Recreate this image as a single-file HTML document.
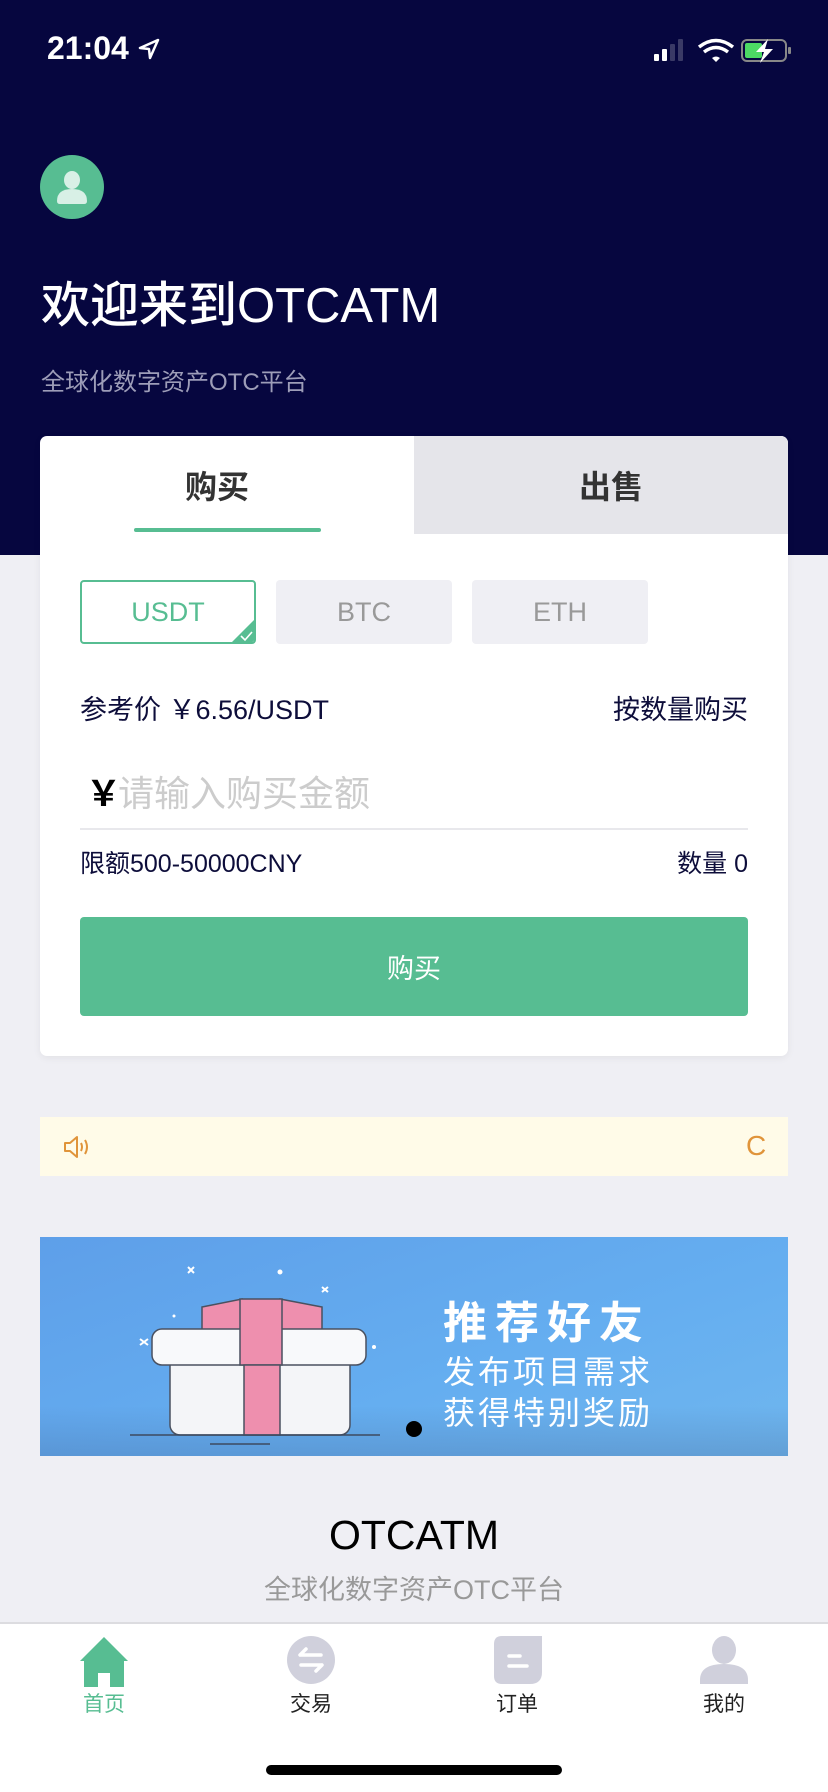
<!DOCTYPE html>
<html><head><meta charset="utf-8">
<style>
*{margin:0;padding:0;box-sizing:border-box}
body{width:828px;height:1792px;background:#efeff4;font-family:"Liberation Sans","Noto Sans CJK SC",sans-serif;position:relative;overflow:hidden}
.abs{position:absolute}
.hdr{left:0;top:0;width:828px;height:555px;background:#06063f}
.card{left:40px;top:436px;width:748px;height:620px;background:#fff;border-radius:7px;box-shadow:0 2px 8px rgba(0,0,0,.06);overflow:hidden}
.coin{position:absolute;top:144px;width:176px;height:64px;border-radius:4px;background:#efeff4;color:#999;font-size:27px;display:flex;align-items:center;justify-content:center}
</style></head><body>
<div class="abs hdr"></div>
<div class="abs" style="left:47px;top:30px;color:#fff;font-size:32px;font-weight:bold">21:04</div>
<svg class="abs" style="left:138px;top:38px" width="22" height="22" viewBox="0 0 22 22"><path d="M20 2 L2 10 L11 11 L12 20 Z" fill="none" stroke="#fff" stroke-width="2.5" stroke-linejoin="round"/></svg>
<svg class="abs" style="left:652px;top:38px" width="140" height="26" viewBox="0 0 140 26">
<rect x="2" y="16" width="5" height="7" rx="1" fill="#fff"/><rect x="10" y="11" width="5" height="12" rx="1" fill="#fff"/><rect x="18" y="6" width="5" height="17" rx="1" fill="#3a3a66"/><rect x="26" y="1" width="5" height="22" rx="1" fill="#3a3a66"/>
<path d="M47 9 Q64 -4 81 9" stroke="#fff" stroke-width="3.5" fill="none"/><path d="M52 14 Q64 5 76 14" stroke="#fff" stroke-width="3.5" fill="none"/><path d="M60 20 L64 24 L68 20 Q64 17 60 20Z" fill="#fff"/>
<rect x="90" y="2" width="44" height="21" rx="5" fill="none" stroke="#888" stroke-width="2"/><rect x="93" y="5" width="17" height="15" rx="2" fill="#4cd964"/><rect x="136" y="9" width="3" height="7" rx="1" fill="#888"/><path d="M116 1 L104 14 L112 14 L108 25 L121 11 L113 11 Z" fill="#fff"/>
</svg>
<svg class="abs" style="left:40px;top:155px" width="64" height="64" viewBox="0 0 64 64"><circle cx="32" cy="32" r="32" fill="#57bd92"/><ellipse cx="32" cy="25" rx="8" ry="9" fill="#d8f0e6"/><path d="M17 46 Q17 34 32 34 Q47 34 47 46 Q47 49 44 49 L20 49 Q17 49 17 46Z" fill="#d8f0e6"/></svg>
<div class="abs" style="left:41px;top:276px;color:#fff;font-size:49px;line-height:60px;font-weight:500">欢迎来到OTCATM</div>
<div class="abs" style="left:41px;top:362px;color:#9d9db8;font-size:24px">全球化数字资产OTC平台</div>

<div class="abs card">
  <div class="abs" style="left:374px;top:0;width:374px;height:98px;background:#e5e5ea"></div>
  <div class="abs" style="left:-10px;top:0;width:374px;height:98px;display:flex;align-items:center;justify-content:center;font-size:32px;font-weight:bold;color:#333">购买</div>
  <div class="abs" style="left:384px;top:0;width:374px;height:98px;display:flex;align-items:center;justify-content:center;font-size:32px;font-weight:bold;color:#333">出售</div>
  <div class="abs" style="left:94px;top:92px;width:187px;height:4px;background:#57bd92;border-radius:2px"></div>
  <div class="coin" style="left:40px;background:#fff;border:2px solid #57bd92;color:#57bd92;overflow:hidden">USDT
    <svg style="position:absolute;right:-1px;bottom:-1px" width="24" height="24" viewBox="0 0 24 24"><path d="M24 0 L24 24 L0 24Z" fill="#57bd92"/><path d="M10 17 L14 21 L21 13" stroke="#fff" stroke-width="1.6" fill="none"/></svg></div>
  <div class="coin" style="left:236px">BTC</div>
  <div class="coin" style="left:432px">ETH</div>
  <div class="abs" style="left:40px;top:252px;font-size:27px;color:#0d0d3a">参考价 ￥6.56/USDT</div>
  <div class="abs" style="right:40px;top:252px;font-size:27px;color:#0d0d3a">按数量购买</div>
  <div class="abs" style="left:46px;top:330px;font-size:35px;color:#000;font-weight:bold">￥</div>
  <div class="abs" style="left:78px;top:329px;font-size:36px;color:#ccc">请输入购买金额</div>
  <div class="abs" style="left:40px;top:392px;width:668px;height:2px;background:#e8e8ec"></div>
  <div class="abs" style="left:40px;top:408px;font-size:25px;color:#0d0d3a">限额500-50000CNY</div>
  <div class="abs" style="right:40px;top:408px;font-size:25px;color:#0d0d3a">数量 0</div>
  <div class="abs" style="left:40px;top:481px;width:668px;height:99px;background:#57bd92;border-radius:4px;color:#fff;font-size:27px;display:flex;align-items:center;justify-content:center">购买</div>
</div>

<div class="abs" style="left:40px;top:1117px;width:748px;height:59px;background:#fffbe8"></div>
<svg class="abs" style="left:63px;top:1134px" width="30" height="26" viewBox="0 0 30 26"><path d="M2 9 L7 9 L14 3 L14 23 L7 17 L2 17Z" fill="none" stroke="#e0943a" stroke-width="2" stroke-linejoin="round"/><path d="M18 9 Q20 13 18 17" stroke="#e0943a" stroke-width="2" fill="none"/><path d="M22 6 Q26 13 22 20" stroke="#e0943a" stroke-width="2" fill="none"/></svg>
<div class="abs" style="left:746px;top:1130px;font-size:28px;color:#e0943a">C</div>

<div class="abs" style="left:40px;top:1237px;width:748px;height:219px;background:linear-gradient(160deg,#5e9fe9 0%,#65aef0 60%,#6fb6ee 100%);overflow:hidden">
  <div class="abs" style="left:0;bottom:0;width:748px;height:50px;background:linear-gradient(rgba(0,0,0,0),rgba(60,90,140,.25))"></div>
  <svg class="abs" style="left:90px;top:10px" width="280" height="200" viewBox="0 0 280 200">
    <g fill="#fff"><circle cx="84" cy="77" r="2"/><circle cx="244" cy="100" r="2"/><circle cx="150" cy="25" r="2.5"/><circle cx="44" cy="69" r="1.5"/></g>
    <g stroke="#fff" stroke-width="2"><path d="M10 92 l8 6 M18 92 l-8 6"/><path d="M58 20 l6 6 M64 20 l-6 6"/><path d="M192 40 l6 5 M198 40 l-6 5"/></g>
    <path d="M72 60 L112 52 L112 86 L72 86Z" fill="#ee8fae" stroke="#4a5160" stroke-width="1.5"/>
    <path d="M150 52 L192 60 L192 86 L150 86Z" fill="#ee8fae" stroke="#4a5160" stroke-width="1.5"/>
    <rect x="40" y="106" width="180" height="82" rx="10" fill="#f4f5f8" stroke="#4a5160" stroke-width="1.5"/>
    <rect x="22" y="82" width="214" height="36" rx="10" fill="#f8f9fb" stroke="#4a5160" stroke-width="1.5"/>
    <rect x="110" y="52" width="42" height="66" fill="#ee8fae" stroke="#4a5160" stroke-width="1.5"/>
    <rect x="114" y="118" width="36" height="70" fill="#ee8fae" stroke="#4a5160" stroke-width="1.5"/>
    <path d="M0 188 L250 188 M80 197 L140 197" stroke="#3d4a60" stroke-width="1.5"/>
  </svg>
  <div class="abs" style="left:403px;top:50px;font-size:44px;font-weight:bold;color:#fff;letter-spacing:8px">推荐好友</div>
  <div class="abs" style="left:403px;top:110px;font-size:32px;color:#fff;letter-spacing:3px">发布项目需求</div>
  <div class="abs" style="left:403px;top:151px;font-size:32px;color:#fff;letter-spacing:3px">获得特别奖励</div>
  <div class="abs" style="left:366px;top:184px;width:16px;height:16px;border-radius:50%;background:#000"></div>
</div>

<div class="abs" style="left:0;width:828px;top:1512px;text-align:center;font-size:41px;color:#000">OTCATM</div>
<div class="abs" style="left:0;width:828px;top:1568px;text-align:center;font-size:27px;color:#999">全球化数字资产OTC平台</div>

<div class="abs" style="left:0;top:1622px;width:828px;height:170px;background:#fff;border-top:2px solid #dcdce0"></div>
<svg class="abs" style="left:79px;top:1635px" width="50" height="52" viewBox="0 0 50 52"><path d="M25 2 L49 26 L45 26 L45 52 L31 52 L31 38 L19 38 L19 52 L5 52 L5 26 L1 26Z" fill="#57bd92" stroke-linejoin="round"/></svg>
<svg class="abs" style="left:287px;top:1636px" width="48" height="48" viewBox="0 0 48 48"><circle cx="24" cy="24" r="24" fill="#d0d0dc"/><path d="M14 19 L34 19 M19 13 L13 19 M14 29 L34 29 M29 35 L35 29" stroke="#fff" stroke-width="3.5" stroke-linecap="round"/></svg>
<svg class="abs" style="left:494px;top:1636px" width="48" height="48" viewBox="0 0 48 48"><path d="M8 0 L48 0 L48 36 Q48 48 36 48 L8 48 Q0 48 0 40 L0 8 Q0 0 8 0Z" fill="#d0d0dc"/><path d="M15 20 L26 20 M15 30 L33 30" stroke="#fff" stroke-width="3.5" stroke-linecap="round"/></svg>
<svg class="abs" style="left:700px;top:1636px" width="48" height="48" viewBox="0 0 48 48"><ellipse cx="24" cy="14" rx="12" ry="14" fill="#d0d0dc"/><path d="M0 44 Q0 28 24 28 Q48 28 48 44 L48 48 L0 48Z" fill="#d0d0dc"/></svg>
<div class="abs" style="left:54px;width:100px;top:1688px;text-align:center;font-size:21px;color:#57bd92">首页</div>
<div class="abs" style="left:261px;width:100px;top:1688px;text-align:center;font-size:21px;color:#222">交易</div>
<div class="abs" style="left:467px;width:100px;top:1688px;text-align:center;font-size:21px;color:#222">订单</div>
<div class="abs" style="left:674px;width:100px;top:1688px;text-align:center;font-size:21px;color:#222">我的</div>
<div class="abs" style="left:266px;top:1765px;width:296px;height:10px;border-radius:5px;background:#000"></div>
</body></html>
